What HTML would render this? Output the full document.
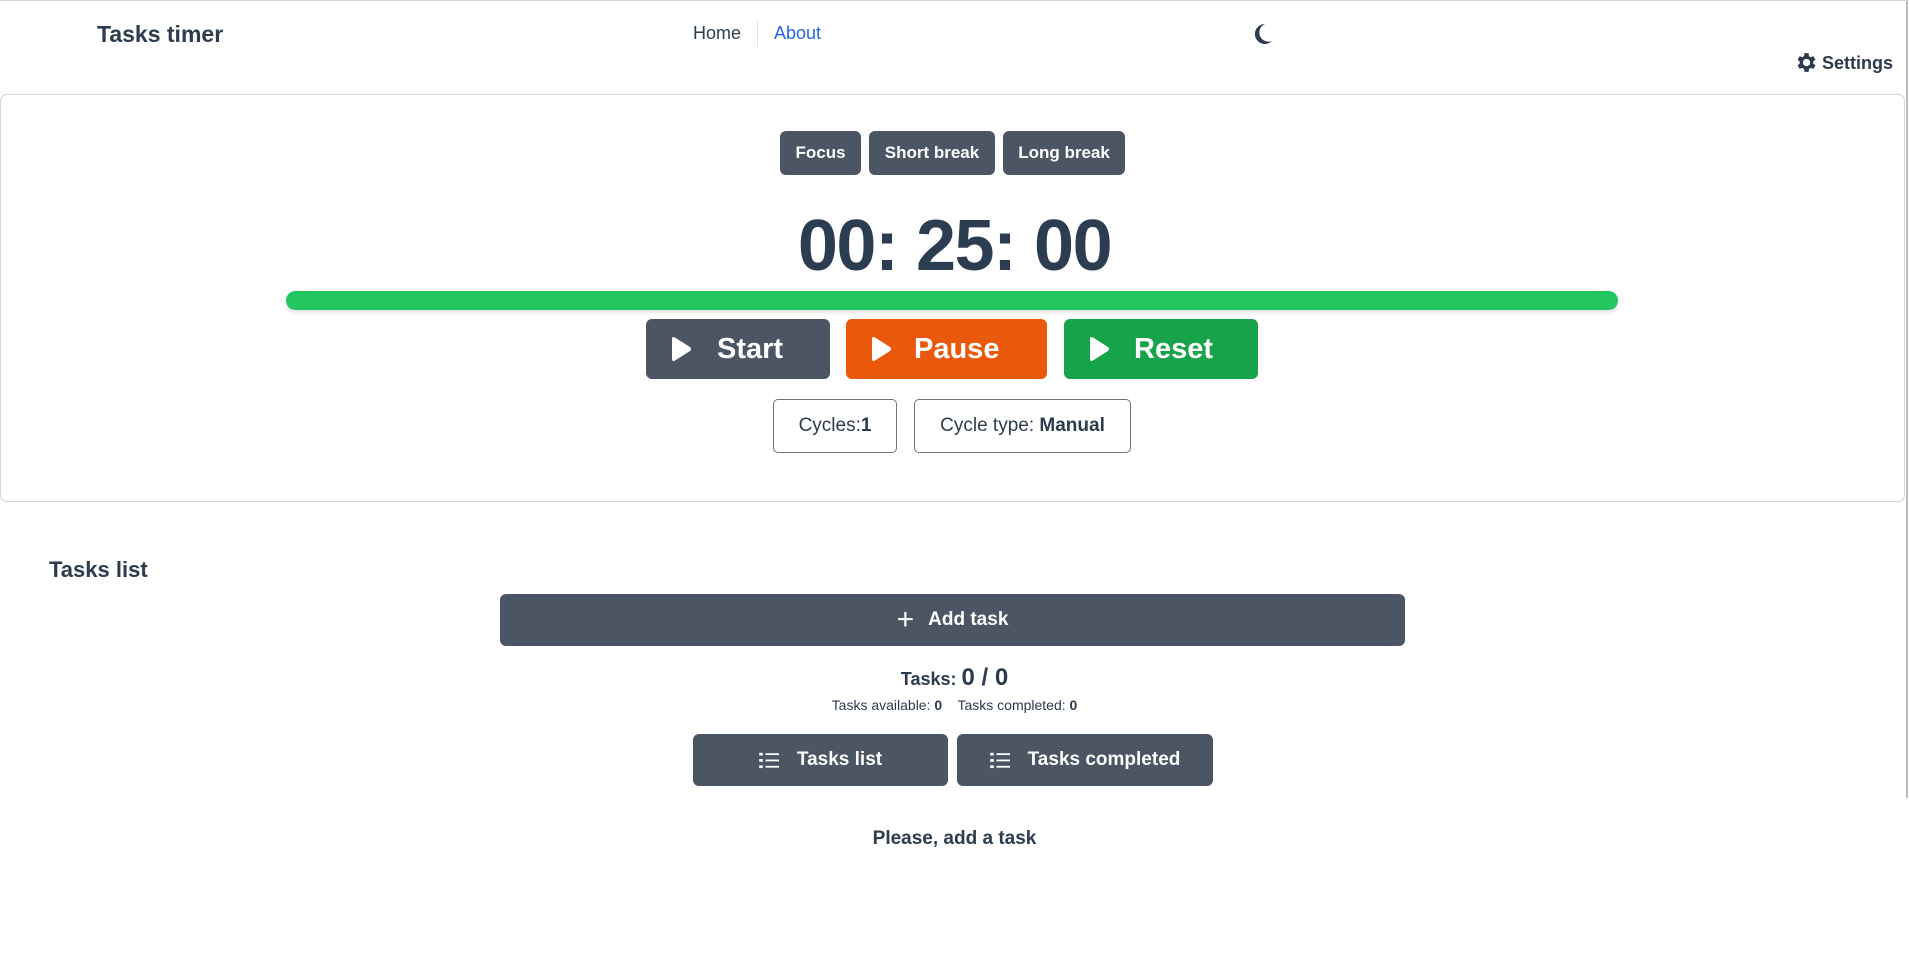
<!DOCTYPE html>
<html><head><meta charset="utf-8"><style>
*{box-sizing:border-box;margin:0;padding:0}
body{width:1909px;height:954px;background:#fff;font-family:"Liberation Sans",sans-serif;color:#2d3b4e;position:relative;overflow:hidden;border-top:1px solid #d8d8d8}
.a{position:absolute}
.btn{position:absolute;background:#4b5563;color:#fff;font-weight:bold;border-radius:6px;display:flex;align-items:center;justify-content:center}
.c{position:absolute;left:0;width:1909px;text-align:center}
</style></head><body>
<div class="a" style="left:1906px;top:0;width:2px;height:797px;background:#bbb"></div>
<div class="a" style="left:97px;top:20px;font-size:23px;font-weight:bold">Tasks timer</div>
<div class="a" style="left:693px;top:22px;font-size:18px">Home</div>
<div class="a" style="left:757px;top:20px;width:1px;height:26px;background:#e2e2e2"></div>
<div class="a" style="left:774px;top:22px;font-size:18px;color:#2563eb">About</div>
<svg class="a" style="left:1253px;top:22px" width="20" height="22" viewBox="0 0 20 22"><path d="M12 1A10 10 0 1 0 19 18 8 8 0 0 1 12 1Z" fill="#2d3b4e"/></svg>
<svg class="a" style="left:1793px;top:49px" width="25" height="25" viewBox="0 0 24 24"><path fill="#2d3b4e" d="M19.4 13a7.5 7.5 0 0 0 0-2l2.1-1.6-2-3.5-2.5 1a7 7 0 0 0-1.7-1L15 3h-4l-.4 2.9a7 7 0 0 0-1.7 1l-2.5-1-2 3.5L6.5 11a7.5 7.5 0 0 0 0 2l-2.1 1.6 2 3.5 2.5-1a7 7 0 0 0 1.7 1L11 21h4l.4-2.9a7 7 0 0 0 1.7-1l2.5 1 2-3.5ZM13 15.5a3.5 3.5 0 1 1 0-7 3.5 3.5 0 0 1 0 7Z"/></svg>
<div class="a" style="left:1822px;top:52px;font-size:18px;font-weight:bold">Settings</div>

<div class="a" style="left:0;top:93px;width:1905px;height:408px;border:1px solid #d4d4d4;border-radius:7px"></div>
<div class="btn" style="left:780px;top:130px;width:81px;height:44px;font-size:17px">Focus</div>
<div class="btn" style="left:869px;top:130px;width:126px;height:44px;font-size:17px">Short break</div>
<div class="btn" style="left:1003px;top:130px;width:122px;height:44px;font-size:17px">Long break</div>
<div class="c" style="top:205px;font-size:72px;font-weight:bold;letter-spacing:-1.5px;color:#2c3d51;line-height:80px">00: 25: 00</div>
<div class="a" style="left:286px;top:290px;width:1332px;height:19px;background:#22c55e;border-radius:10px;box-shadow:0 2px 4px rgba(0,0,0,.15)"></div>
<div class="btn" style="left:646px;top:318px;width:184px;height:60px;font-size:29px;justify-content:flex-start;padding-left:24px"><svg width="22" height="26" viewBox="0 0 22 26"><path d="M2 3Q2 0 5 1.5L20 11Q22 13 20 15L5 24.5Q2 26 2 23Z" fill="#fff"/></svg><span style="margin-left:25px">Start</span></div>
<div class="btn" style="left:846px;top:318px;width:201px;height:60px;font-size:29px;background:#ea580c;justify-content:flex-start;padding-left:24px"><svg width="22" height="26" viewBox="0 0 22 26"><path d="M2 3Q2 0 5 1.5L20 11Q22 13 20 15L5 24.5Q2 26 2 23Z" fill="#fff"/></svg><span style="margin-left:22px">Pause</span></div>
<div class="btn" style="left:1064px;top:318px;width:194px;height:60px;font-size:29px;background:#16a34a;justify-content:flex-start;padding-left:24px"><svg width="22" height="26" viewBox="0 0 22 26"><path d="M2 3Q2 0 5 1.5L20 11Q22 13 20 15L5 24.5Q2 26 2 23Z" fill="#fff"/></svg><span style="margin-left:24px">Reset</span></div>
<div class="a" style="left:773px;top:398px;width:124px;height:54px;border:1px solid #6b7280;border-radius:5px;font-size:19px;display:flex;align-items:center;justify-content:center">Cycles:<b>1</b></div>
<div class="a" style="left:914px;top:398px;width:217px;height:54px;border:1px solid #6b7280;border-radius:5px;font-size:19px;display:flex;align-items:center;justify-content:center">Cycle type:&nbsp;<b>Manual</b></div>

<div class="a" style="left:49px;top:556px;font-size:22px;font-weight:bold">Tasks list</div>
<div class="btn" style="left:500px;top:593px;width:905px;height:52px;font-size:19px"><span style="font-size:30px;font-weight:normal;margin-right:14px;line-height:20px">+</span>Add task</div>
<div class="c" style="top:663px;font-size:18px;font-weight:bold">Tasks: <span style="font-size:24px">0 / 0</span></div>
<div class="c" style="top:696px;font-size:14px">Tasks available: <b>0</b> &nbsp;&nbsp; Tasks completed: <b>0</b></div>
<div class="btn" style="left:693px;top:733px;width:255px;height:52px;font-size:19px"><svg width="22" height="18" viewBox="0 0 24 20" style="margin-right:16px"><g fill="#fff"><rect x="0" y="2" width="4" height="3"/><rect x="0" y="9" width="4" height="3"/><rect x="0" y="16" width="4" height="3"/><rect x="7" y="2.5" width="15" height="2"/><rect x="7" y="9.5" width="15" height="2"/><rect x="7" y="16.5" width="15" height="2"/></g></svg>Tasks list</div>
<div class="btn" style="left:957px;top:733px;width:256px;height:52px;font-size:19px"><svg width="22" height="18" viewBox="0 0 24 20" style="margin-right:16px"><g fill="#fff"><rect x="0" y="2" width="4" height="3"/><rect x="0" y="9" width="4" height="3"/><rect x="0" y="16" width="4" height="3"/><rect x="7" y="2.5" width="15" height="2"/><rect x="7" y="9.5" width="15" height="2"/><rect x="7" y="16.5" width="15" height="2"/></g></svg>Tasks completed</div>
<div class="c" style="top:827px;font-size:19px;font-weight:bold">Please, add a task</div>
</body></html>
